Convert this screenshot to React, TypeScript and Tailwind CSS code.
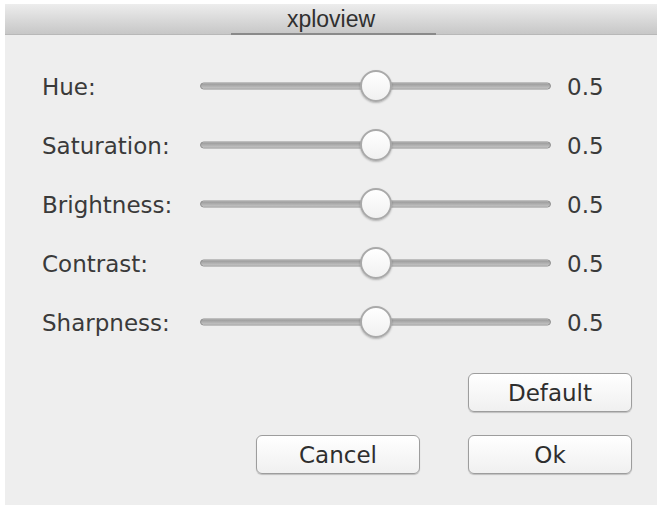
import React from 'react';

const rows = ['Hue:', 'Saturation:', 'Brightness:', 'Contrast:', 'Sharpness:'];

function Slider({ value }: { value: number }) {
  return (
    <div className="relative h-full w-[351px]">
      <div className="absolute left-0 right-0 top-1/2 h-[7px] -translate-y-1/2 rounded-full border border-[#8f8f8f] bg-gradient-to-b from-[#9a9a9a] to-[#c4c4c4]" />
      <div
        className="absolute top-1/2 h-[32px] w-[32px] -translate-x-1/2 -translate-y-1/2 rounded-full border-2 border-[#a9a9a9] bg-gradient-to-b from-white to-[#f1f1f1] shadow-[0_1px_2px_rgba(0,0,0,0.25)]"
        style={{ left: `${value * 100}%` }}
      />
    </div>
  );
}

function MacButton({ label }: { label: string }) {
  return (
    <button className="flex h-[39px] w-[164px] items-center justify-center rounded-[6px] border border-[#9d9d9d] bg-gradient-to-b from-white to-[#f0f0f0] pt-[2px] text-[23px] text-[#2e2e2e] shadow-[0_1px_1px_rgba(0,0,0,0.2)]">
      {label}
    </button>
  );
}

export default function App() {
  return (
    <div className="h-[509px] w-[659px] bg-white pb-[4px] pl-[5px] pr-[2px] pt-[4px] font-['DejaVu_Sans',sans-serif]">
      <div className="flex h-full flex-col bg-[#eeeeee]">
        {/* Title bar */}
        <div className="relative flex h-[31px] items-center justify-center bg-gradient-to-b from-[#ededed] to-[#c7c7c7] border-b border-[#b8b8b8]">
          <span className="font-['Liberation_Sans',sans-serif] text-[23px] leading-none text-[#303030]">xploview</span>
          <div className="absolute bottom-[-1px] left-[226px] h-[2px] w-[205px] bg-[#8a8a8a]" />
        </div>

        {/* Sliders */}
        <div className="flex flex-col pl-[37px] pt-[21px]">
          {rows.map((label) => (
            <div key={label} className="flex h-[59px] items-center">
              <span className="mt-[3px] w-[158px] text-[23px] text-[#3a3a3a]">{label}</span>
              <Slider value={0.5} />
              <span className="ml-[16px] mt-[3px] text-[23px] text-[#3a3a3a]">0.5</span>
            </div>
          ))}
        </div>

        {/* Buttons */}
        <div className="mt-[22px] flex justify-end pr-[25px]">
          <MacButton label="Default" />
        </div>
        <div className="mt-[23px] flex justify-end gap-[48px] pr-[25px]">
          <MacButton label="Cancel" />
          <MacButton label="Ok" />
        </div>
      </div>
    </div>
  );
}
